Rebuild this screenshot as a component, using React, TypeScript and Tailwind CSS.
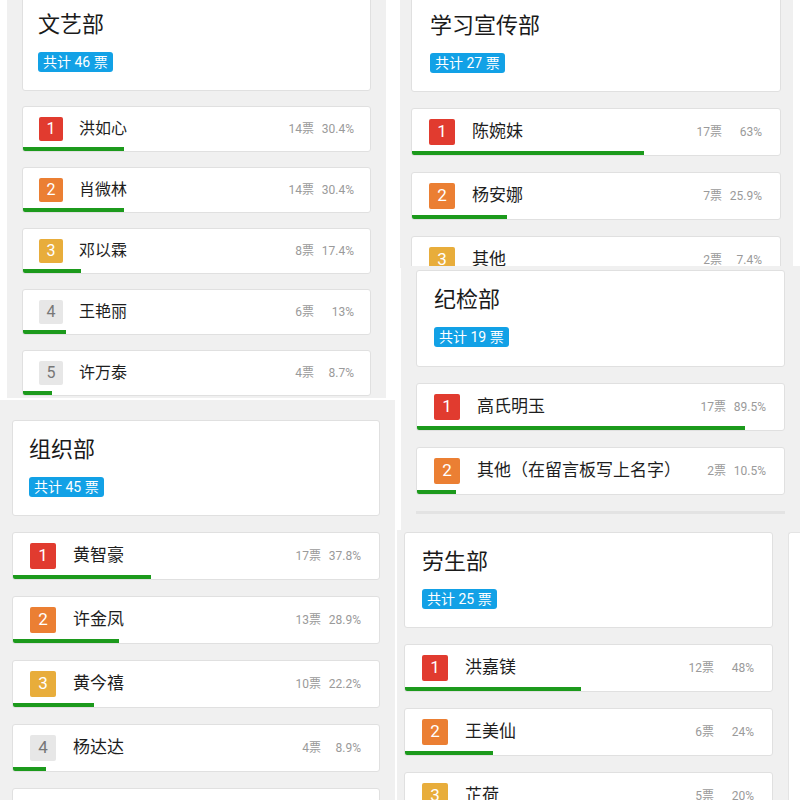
import React from 'react';

type Candidate = { name: string; votes: number; pct: string };

type Size = {
  row: string;
  gap: string;
  box: string;
  num: string;
  name: string;
  rowPad: string;
  barScale: number;
};

const small: Size = {
  row: 'h-[46px]',
  gap: 'gap-[15px]',
  box: 'w-[24px] h-[24px]',
  num: 'text-[16px]',
  name: 'text-[16px] ml-[16px]',
  rowPad: 'pl-[16px] pr-[16px]',
  barScale: 0.96,
};

const medium: Size = {
  row: 'h-[48px]',
  gap: 'gap-[16px]',
  box: 'w-[26px] h-[26px]',
  num: 'text-[17px]',
  name: 'text-[17px] ml-[17px]',
  rowPad: 'pl-[17px] pr-[18px]',
  barScale: 1,
};

const rankColors = ['bg-[#e13b2f] text-white', 'bg-[#eb7f33] text-white', 'bg-[#e8ad3b] text-white'];

const font = { fontFamily: 'Roboto, "Noto Sans CJK SC", sans-serif' };

const Row: React.FC<{ rank: number; c: Candidate; size: Size }> = ({ rank, c, size }) => {
  const color = rankColors[rank - 1] || 'bg-[#e7e7e7] text-[#777]';
  return (
    <div className={`${size.row} shrink-0 bg-white border border-[#e0e0e0] rounded-[3px] flex flex-col overflow-hidden`}>
      <div className={`flex-1 flex items-center ${size.rowPad} pt-[3px]`}>
        <div className={`${size.box} ${color} ${size.num} rounded-[2px] flex items-center justify-center leading-none`}>
          {rank}
        </div>
        <div className={`${size.name} text-[#1e1e1e] whitespace-nowrap`}>{c.name}</div>
        <div className="ml-auto flex items-center text-[12px] text-[#9a9a9a] whitespace-nowrap">
          <span>{c.votes}票</span>
          <span className="w-[40px] text-right">{c.pct}%</span>
        </div>
      </div>
      <div className="h-[4px] bg-[#1c9a1c]" style={{ width: `${parseFloat(c.pct) * size.barScale}%` }} />
    </div>
  );
};

const Header: React.FC<{ title: string; total: number; cls: string }> = ({ title, total, cls }) => (
  <div className={`shrink-0 bg-white border border-[#e0e0e0] rounded-[3px] ${cls}`}>
    <div className="text-[22px] leading-[30px] text-[#1a1a1a]">{title}</div>
    <div className="mt-[12px] inline-flex items-center h-[20px] px-[5px] rounded-[3px] bg-[#12a1e6] text-white text-[14px] leading-none">
      共计 {total} 票
    </div>
  </div>
);

const Section: React.FC<{
  title: string;
  total: number;
  list: Candidate[];
  size: Size;
  headerCls: string;
  extra?: 'row' | 'line';
}> = ({ title, total, list, size, headerCls, extra }) => (
  <div className={`flex flex-col ${size.gap}`}>
    <Header title={title} total={total} cls={headerCls} />
    {list.map((c, i) => (
      <Row key={c.name} rank={i + 1} c={c} size={size} />
    ))}
    {extra === 'row' && <div className={`${size.row} shrink-0 bg-white border border-[#e0e0e0] rounded-[3px]`} />}
    {extra === 'line' && <div className="h-[3px] shrink-0 bg-[#e3e3e3]" />}
  </div>
);

const wenyi: Candidate[] = [
  { name: '洪如心', votes: 14, pct: '30.4' },
  { name: '肖微林', votes: 14, pct: '30.4' },
  { name: '邓以霖', votes: 8, pct: '17.4' },
  { name: '王艳丽', votes: 6, pct: '13' },
  { name: '许万泰', votes: 4, pct: '8.7' },
];

const xuanchuan: Candidate[] = [
  { name: '陈婉妹', votes: 17, pct: '63' },
  { name: '杨安娜', votes: 7, pct: '25.9' },
  { name: '其他', votes: 2, pct: '7.4' },
];

const jijian: Candidate[] = [
  { name: '高氏明玉', votes: 17, pct: '89.5' },
  { name: '其他（在留言板写上名字）', votes: 2, pct: '10.5' },
];

const zuzhi: Candidate[] = [
  { name: '黄智豪', votes: 17, pct: '37.8' },
  { name: '许金凤', votes: 13, pct: '28.9' },
  { name: '黄今禧', votes: 10, pct: '22.2' },
  { name: '杨达达', votes: 4, pct: '8.9' },
];

const laosheng: Candidate[] = [
  { name: '洪嘉镁', votes: 12, pct: '48' },
  { name: '王美仙', votes: 6, pct: '24' },
  { name: '芷荷', votes: 5, pct: '20' },
];

export default function App() {
  return (
    <div className="relative w-[800px] h-[800px] bg-white overflow-hidden" style={font}>
      {/* screenshot 1 */}
      <div className="absolute left-[7px] top-0 w-[379px] h-[398px] bg-[#f0f0f0] overflow-hidden px-[15px]">
        <div className="mt-[-9px]">
          <Section title="文艺部" total={46} list={wenyi} size={small} headerCls="pl-[15px] pt-[18px] pb-[16px]" />
        </div>
      </div>

      {/* screenshot 2 */}
      <div className="absolute left-[400px] top-0 w-[393px] h-[268px] bg-[#f0f0f0] overflow-hidden pl-[11px] pr-[12px]">
        <div className="mt-[-10px]">
          <Section title="学习宣传部" total={27} list={xuanchuan} size={medium} headerCls="pl-[18px] pt-[20px] pb-[16px]" />
        </div>
      </div>

      {/* screenshot 3 */}
      <div className="absolute left-[401px] top-[266px] w-[399px] h-[264px] bg-[#f0f0f0] overflow-hidden pl-[15px] pr-[15px] pt-[4px]">
        <Section
          title="纪检部"
          total={19}
          list={jijian}
          size={medium}
          headerCls="pl-[17px] pt-[14px] pb-[17px]"
          extra="line"
        />
      </div>

      {/* screenshot 4 */}
      <div className="absolute left-0 top-[400px] w-[395px] h-[400px] bg-[#f0f0f0] overflow-hidden pl-[12px] pr-[15px] pt-[20px]">
        <Section
          title="组织部"
          total={45}
          list={zuzhi}
          size={medium}
          headerCls="pl-[16px] pt-[14px] pb-[16px]"
          extra="row"
        />
      </div>

      {/* screenshot 5 */}
      <div className="absolute left-[397px] top-[530px] w-[403px] h-[270px] bg-[#f0f0f0] overflow-hidden flex pt-[2px]">
        <div className="w-[376px] shrink-0 pl-[7px]">
          <Section title="劳生部" total={25} list={laosheng} size={medium} headerCls="pl-[17px] pt-[14px] pb-[16px]" />
        </div>
        <div className="ml-[15px] flex-1 bg-white border-l border-t border-[#e4e4e4] rounded-tl-[3px]" />
      </div>
    </div>
  );
}
